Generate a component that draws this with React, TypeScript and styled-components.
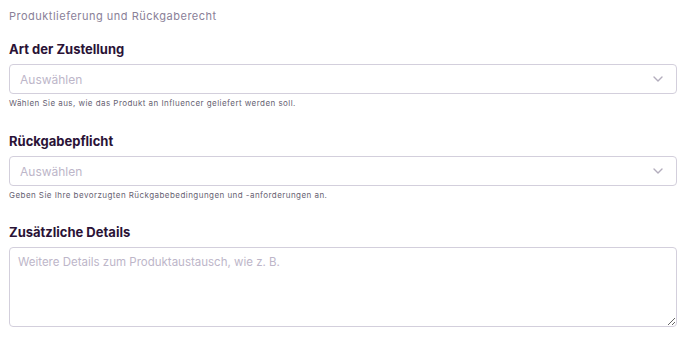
import React from "react";
import styled, { createGlobalStyle } from "styled-components";

const Global = createGlobalStyle`
  html, body { margin: 0; padding: 0; background: #fff; }
  body { font-family: Inter, "Noto Sans", sans-serif; }
  * { box-sizing: border-box; }
`;

const Page = styled.div`
  padding: 9px 11px 0 9px;
  display: flex;
  flex-direction: column;
`;

const SectionTitle = styled.div`
  font-size: 11px;
  line-height: 14px;
  letter-spacing: 0.5px;
  color: #8a8198;
  margin-bottom: 18px;
`;

const Field = styled.div<{ $gap?: number }>`
  display: flex;
  flex-direction: column;
  margin-bottom: ${(p) => p.$gap ?? 0}px;
`;

const Label = styled.label`
  font-size: 13px;
  line-height: 16px;
  font-weight: 700;
  color: #2a1236;
  margin-bottom: 7px;
`;

const SelectBox = styled.div`
  height: 30px;
  border: 1px solid #d3cfdc;
  border-radius: 4px;
  display: flex;
  align-items: center;
  justify-content: space-between;
  padding: 0 13px 0 10px;
  background: #fff;
`;

const Placeholder = styled.span`
  font-size: 12px;
  color: #bdb6c9;
`;

const Helper = styled.div`
  font-size: 8px;
  line-height: 10px;
  letter-spacing: 0.45px;
  color: #675f72;
  margin-top: 4px;
`;

const TextArea = styled.textarea`
  height: 80px;
  border: 1px solid #d3cfdc;
  border-radius: 4px;
  padding: 7px 8px;
  font-family: Inter, "Noto Sans", sans-serif;
  font-size: 11.5px;
  color: #2a1236;
  resize: vertical;
  outline: none;
  &::placeholder { color: #bdb6c9; }
`;

const Chevron = () => (
  <svg width="10" height="6" viewBox="0 0 10 6" fill="none">
    <path d="M1 1l4 4 4-4" stroke="#b3adbd" strokeWidth="1.4" strokeLinecap="round" strokeLinejoin="round" />
  </svg>
);

export default function App() {
  return (
    <>
      <Global />
      <Page>
        <SectionTitle>Produktlieferung und Rückgaberecht</SectionTitle>
        <Field $gap={25}>
          <Label>Art der Zustellung</Label>
          <SelectBox>
            <Placeholder>Auswählen</Placeholder>
            <Chevron />
          </SelectBox>
          <Helper>Wählen Sie aus, wie das Produkt an Influencer geliefert werden soll.</Helper>
        </Field>
        <Field $gap={24}>
          <Label>Rückgabepflicht</Label>
          <SelectBox>
            <Placeholder>Auswählen</Placeholder>
            <Chevron />
          </SelectBox>
          <Helper>Geben Sie Ihre bevorzugten Rückgabebedingungen und -anforderungen an.</Helper>
        </Field>
        <Field>
          <Label>Zusätzliche Details</Label>
          <TextArea placeholder="Weitere Details zum Produktaustausch, wie z. B." />
        </Field>
      </Page>
    </>
  );
}
